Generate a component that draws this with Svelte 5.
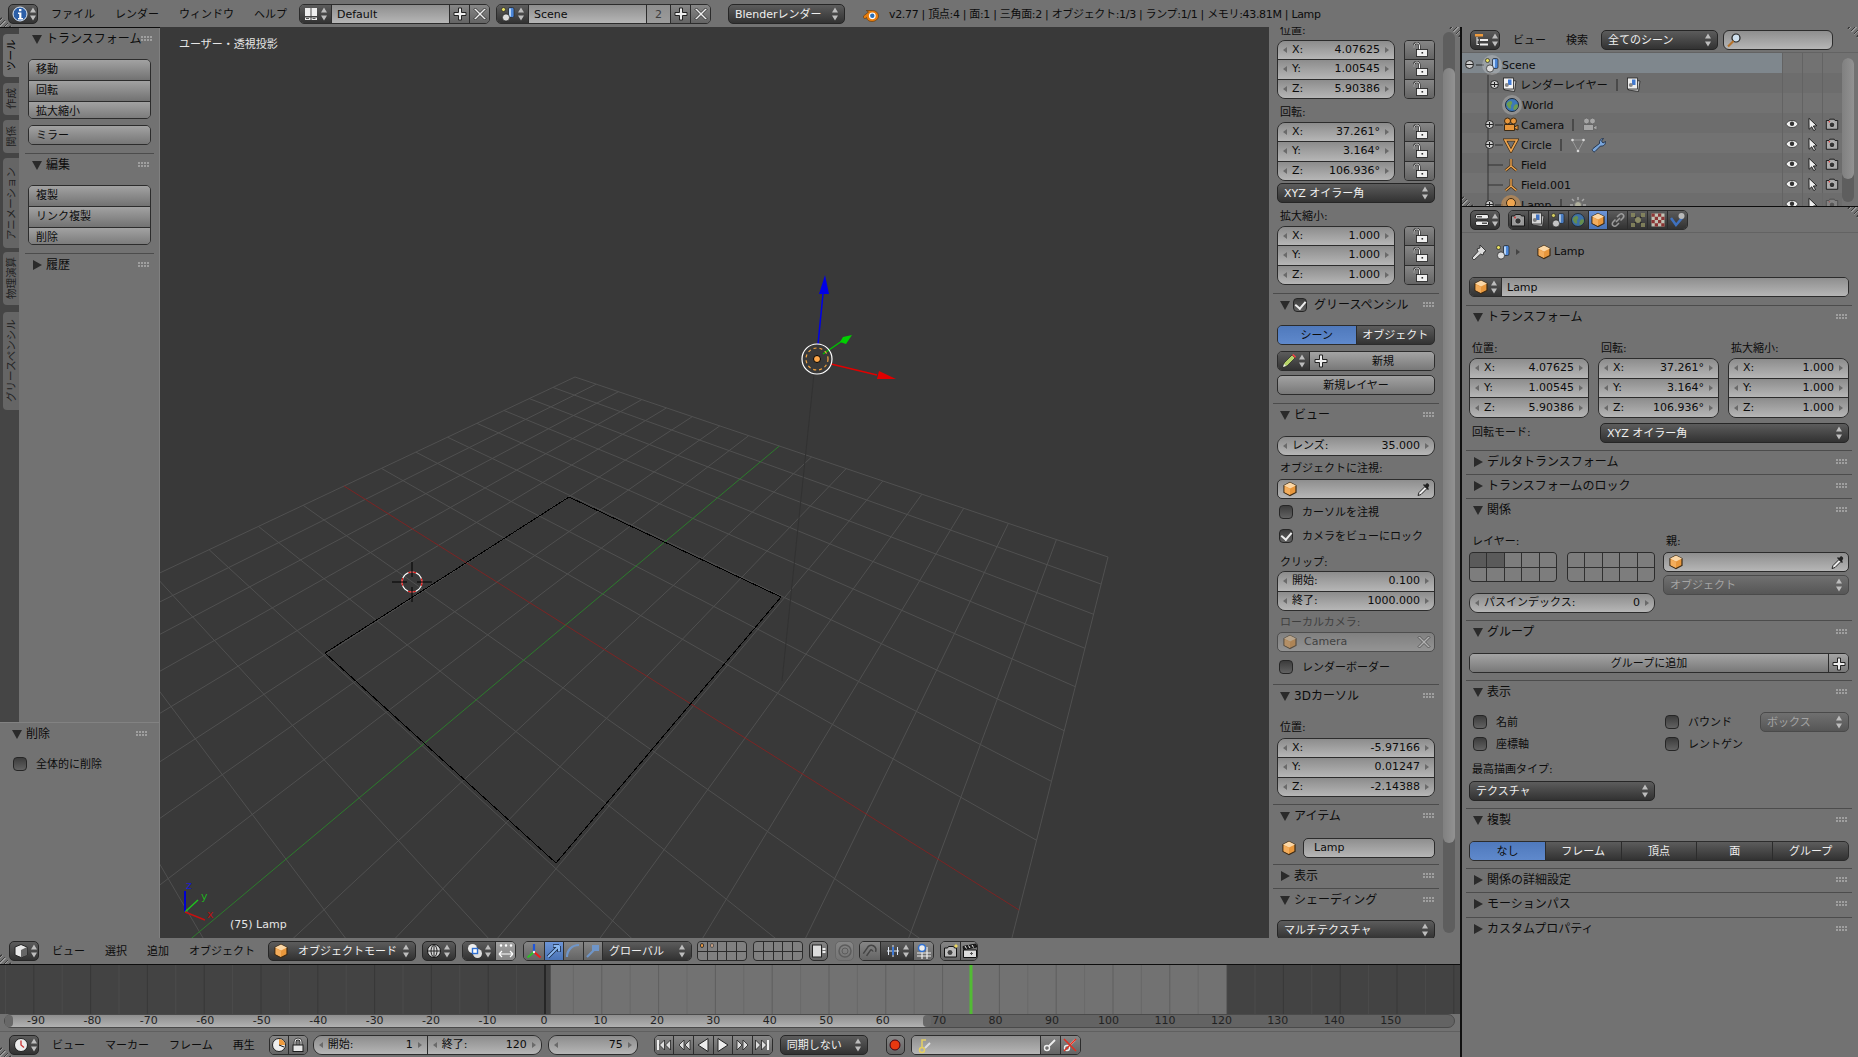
<script>
  // floor grid: homography from ground plane to screen, fitted on the grid corners
  const P = [[575, 377], [1108, 557], [1019, 910], [344, 486]];
  const [[x0, y0], [x1, y1], [x2, y2], [x3, y3]] = P;
  const dx1 = x1 - x2, dx2 = x3 - x2, dx3 = x0 - x1 + x2 - x3;
  const dy1 = y1 - y2, dy2 = y3 - y2, dy3 = y0 - y1 + y2 - y3;
  const den = dx1 * dy2 - dx2 * dy1;
  const g = (dx3 * dy2 - dx2 * dy3) / den;
  const h = (dx1 * dy3 - dx3 * dy1) / den;
  const a = x1 - x0 + g * x1, b = x3 - x0 + h * x3;
  const d = y1 - y0 + g * y1, e = y3 - y0 + h * y3;

  function proj(x, y) {
    const u = (x + 8) / 16, v = (8 - y) / 8;
    const w = g * u + h * v + 1;
    return [(a * u + b * v + x0) / w, (d * u + e * v + y0) / w];
  }
  function line(ax, ay, bx, by) {
    const p = proj(ax, ay), q = proj(bx, by);
    return `M${p[0].toFixed(1)} ${p[1].toFixed(1)}L${q[0].toFixed(1)} ${q[1].toFixed(1)}`;
  }

  let gridPath = '';
  for (let i = -8; i <= 8; i++) {
    if (i !== 0) gridPath += line(i, -8, i, 8) + line(-8, i, 8, i);
  }
  const xAxis = line(-8, 0, 8, 0);
  const yAxis = line(0, -8, 0, 8);

  // timeline
  const frameX = (f) => 545 + f * 5.68;
  const labelX = (f) => 544 + f * 5.645;
  const ticks = [];
  for (let f = -95; f <= 160; f += 5) ticks.push(f);
  const rulerLabels = [];
  for (let f = -90; f <= 150; f += 10) rulerLabels.push(f);

  const rows = [
    { name: 'Scene', x: 1463, gap: 9, exp: 'minus', icon: 'scene', halo: true, sel: true },
    { name: 'レンダーレイヤー', x: 1488, gap: 2, exp: 'plus', icon: 'rlayer', extras: ['rlayer'], bar: 1 },
    { name: 'World', x: 1484, gap: 8, icon: 'world', halo: true },
    { name: 'Camera', x: 1483, gap: 8, exp: 'plus', icon: 'camera', extras: ['camera-gray'], bar: 1, vis: true },
    { name: 'Circle', x: 1483, gap: 8, exp: 'plus', icon: 'meshobj', extras: ['meshdata', 'wrench'], bar: 1, vis: true },
    { name: 'Field', x: 1483, gap: 8, icon: 'empty', vis: true },
    { name: 'Field.001', x: 1483, gap: 8, icon: 'empty', vis: true },
    { name: 'Lamp', x: 1483, gap: 8, exp: 'plus', icon: 'lamp', extras: ['sun-gray'], bar: 1, vis: true, halo: true, lamp: true }
  ];

  const propTabs = ['render', 'rlayer', 'scene', 'world', 'cube', 'link', 'constraint', 'checker', 'physics'];
  const layerCells = Array.from({ length: 10 }, (_, i) => i);
</script>

{#snippet ic(name, cls = '')}
  <svg class="ic {cls}"><use href="#{name}" /></svg>
{/snippet}

{#snippet ud()}
  <svg class="ud"><use href="#updown" /></svg>
{/snippet}

{#snippet hdr(title, open = true, check = false)}
  <div class="hdr">
    <svg class="tri" viewBox="0 0 10 10">
      {#if open}<polygon points="0,1 10,1 5,10" />{:else}<polygon points="1,0 10,5 1,10" />{/if}
    </svg>
    {#if check}<span class="box on small"></span>{/if}
    <span class="ttl">{title}</span>
    <span class="grip"></span>
  </div>
{/snippet}

{#snippet num(label, value)}
  <div class="num">
    <i class="al"></i><span>{label}</span><b>{value}</b><i class="ar"></i>
  </div>
{/snippet}

{#snippet xyz(values)}
  <div class="numgrp">
    {@render num('X:', values[0])}
    {@render num('Y:', values[1])}
    {@render num('Z:', values[2])}
  </div>
{/snippet}

{#snippet locks()}
  <div class="locks">
    <div>{@render ic('lock')}</div>
    <div>{@render ic('lock')}</div>
    <div>{@render ic('lock')}</div>
  </div>
{/snippet}

{#snippet check(label, on = false)}
  <div class="chk">
    <span class="box" class:on></span><span class="chk-t">{label}</span>
  </div>
{/snippet}

{#snippet layers(dotted = false, cls = '')}
  <div class="layers {cls}">
    {#each layerCells as c}
      <span class="lc" class:dot1={dotted && c === 0} class:dot2={dotted && c === 1}></span>
    {/each}
  </div>
{/snippet}

<svg class="defs" width="0" height="0">
  <defs>
    <symbol id="updown" viewBox="0 0 8 14"><path d="M4 .5L7 5.500H1zM4 13.500L1 8.500H7z" fill="#bdbdbd" /></symbol>
    <symbol id="info" viewBox="0 0 16 16"><circle cx="8" cy="8" r="7" fill="#2c5fa8" stroke="#dfe8f3" /><rect x="7" y="3" width="2.400" height="2.200" fill="#fff" /><path d="M6 6.500h3.400V12H11v1.400H6V12h1.200V8H6z" fill="#fff" /></symbol>
    <symbol id="screen" viewBox="0 0 16 16"><path d="M2 2h5.500v8H2zM8.500 2H14v8H8.500zM2 11.500h5.500V14H2zM8.500 11.500H14V14H8.500z" fill="#eee" /><path d="M3 12.500h3M9.500 12.500h3" stroke="#555" /></symbol>
    <symbol id="scene" viewBox="0 0 16 16"><circle cx="3.500" cy="3.500" r="2" fill="#e8e060" stroke="#222" stroke-width=".7" /><rect x="8.500" y="1.500" width="5.500" height="10" rx="1.500" fill="#4b86d8" stroke="#222" stroke-width=".7" /><path d="M9 2.500h2v8H9z" fill="#b8d4f5" /><circle cx="6" cy="11.500" r="3.600" fill="#ddd" stroke="#222" stroke-width=".7" /></symbol>
    <symbol id="blender" viewBox="0 0 16 16"><path d="M.5 10L5.500 6 3.300 4.500h6.200C13 4.500 15.500 7 15.500 10s-3 5.500-6.500 5.500c-3 0-5.200-1.500-5.500-4L2 12.700C1 13 .2 11 .5 10z" fill="#e87d0d" stroke="#5a3208" stroke-width=".6" /><circle cx="9.300" cy="9.800" r="3.400" fill="#fff" /><circle cx="9.300" cy="9.800" r="2.200" fill="#2a6fb8" /></symbol>
    <symbol id="lock" viewBox="0 0 16 16"><path d="M7.500 8V4C7.500 2.200 6.500 1 4.800 1S2 2.200 2 4v2" fill="none" stroke="#1c1c1c" stroke-width="2" /><path d="M7.500 8V4C7.500 2.200 6.500 1 4.800 1S2 2.200 2 4v2" fill="none" stroke="#f6f6f6" stroke-width="1" /><rect x="4.500" y="7.500" width="11" height="7" fill="#f0f0f0" stroke="#1c1c1c" stroke-width=".8" /><rect x="9.500" y="10" width="1.600" height="1.600" fill="#333" /></symbol>
    <symbol id="lockclosed" viewBox="0 0 16 16"><path d="M5 8V5a3 3 0 016 0v3" fill="none" stroke="#1c1c1c" stroke-width="2.600" /><path d="M5 8V5a3 3 0 016 0v3" fill="none" stroke="#eee" stroke-width="1.100" /><rect x="3" y="8" width="10" height="6.500" fill="#e6e6e6" stroke="#1c1c1c" /></symbol>
    <symbol id="pencil" viewBox="0 0 16 16"><path d="M2 14l1-4L11 2l3 3-8 8z" fill="#b6d36a" stroke="#222" stroke-width=".7" /><path d="M11 2l3 3 1-1.400-2.600-2.600z" fill="#e44" /><path d="M2 14l1-3 2 2z" fill="#eee" /></symbol>
    <symbol id="plus" viewBox="0 0 16 16"><path d="M6.500 2h3v4.500H14v3H9.500V14h-3V9.500H2v-3h4.500z" fill="#eee" stroke="#222" /></symbol>
    <symbol id="close" viewBox="0 0 16 16"><path d="M3.500 2L8 6.500 12.500 2 14 3.500 9.500 8 14 12.500 12.500 14 8 9.500 3.500 14 2 12.500 6.500 8 2 3.500z" fill="#eee" stroke="#222" stroke-width=".8" /></symbol>
    <symbol id="cube" viewBox="0 0 16 16"><path d="M8 1.500l6 3v7l-6 3-6-3v-7z" fill="#e8973c" stroke="#3c2a14" stroke-width="1.200" /><path d="M8 1.500l6 3-6 3-6-3z" fill="#fbd7a6" /><path d="M2.600 5.200L8 7.900v6L2.600 11.200z" fill="#f3ad5c" /></symbol>
    <symbol id="dropper" viewBox="0 0 16 16"><path d="M2 14.500l1-3 6-6 2 2-6 6z" fill="#eee" stroke="#222" /><path d="M9 4l1.500-1.500c1-1 3.500 1.500 2.500 2.500L12 7l1 1-1 1-5-5 1-1z" fill="#222" /></symbol>
    <symbol id="view3d" viewBox="0 0 16 16"><path d="M8 1.500l6 2.500v8l-6 2.500L2 12V4z" fill="#e8e8e8" stroke="#222" /><path d="M8 7l6-3v8l-6 2.500z" fill="#666" /></symbol>
    <symbol id="outliner" viewBox="0 0 16 16"><path d="M1 2h8v2.500H1z" fill="#ee9a3c" /><path d="M3 5v8M3 8h2M3 12.500h2" stroke="#eee" /><path d="M6 7h8v2H6zM6 11.500h8v2H6z" fill="#eee" /></symbol>
    <symbol id="props" viewBox="0 0 16 16"><rect x="1.500" y="2.500" width="13" height="4.500" rx="1.500" fill="#eee" stroke="#222" /><rect x="1.500" y="9" width="13" height="4.500" rx="1.500" fill="#eee" stroke="#222" /><rect x="3" y="4" width="5" height="1.500" fill="#555" /><rect x="8" y="10.500" width="5" height="1.500" fill="#555" /></symbol>
    <symbol id="search" viewBox="0 0 16 16"><circle cx="10" cy="6" r="4" fill="#cfe0ee" stroke="#222" stroke-width="1.200" /><path d="M7.500 9L2 14.500" stroke="#b4722c" stroke-width="2.200" /></symbol>
    <symbol id="eye" viewBox="0 0 16 16"><path d="M1 8c2-3 4-4 7-4s5 1 7 4c-2 3-4 4-7 4S3 11 1 8z" fill="#eee" stroke="#222" stroke-width=".8" /><circle cx="8" cy="7.700" r="2.500" fill="#333" /></symbol>
    <symbol id="arrow" viewBox="0 0 16 16"><path d="M4.500 1.500l9 8.500-4 .3 2.500 4-2 1.200-2.300-4.300-3 2.800z" fill="#eee" stroke="#111" /></symbol>
    <symbol id="render" viewBox="0 0 16 16"><path d="M1.500 4h3l1-1.500h5l1 1.500h3v10h-13z" fill="#aaa" stroke="#111" /><circle cx="8" cy="9" r="3.200" fill="#333" stroke="#ddd" stroke-width=".8" /><circle cx="5" cy="5.500" r=".9" fill="#e33" /></symbol>
    <symbol id="rlayer" viewBox="0 0 16 16"><path d="M4 2.500l10 1.500-1.500 10.500-10-1.500z" fill="#ccc" stroke="#222" stroke-width=".8" /><rect x="1.500" y="1" width="10" height="11" fill="#f4f4f4" stroke="#222" stroke-width=".8" /><rect x="6" y="2.500" width="3.500" height="5.500" fill="#3f7ad6" /><circle cx="4.800" cy="8" r="2" fill="#888" /></symbol>
    <symbol id="world" viewBox="0 0 16 16"><circle cx="8" cy="8" r="6.500" fill="#3d78b8" stroke="#1c2a3a" /><path d="M3 6c2-2 4-3 5-1s-2 3-1 5-2 2-3 0-2-2-1-4zM10 9c1-2 3-2 4-1 0 2-1 4-3 5-2 0-2-2-1-4z" fill="#6c9c50" /></symbol>
    <symbol id="camera" viewBox="0 0 16 16"><circle cx="4.500" cy="4" r="3" fill="#e8973c" stroke="#3c2a14" /><circle cx="10.500" cy="4" r="3" fill="#e8973c" stroke="#3c2a14" /><path d="M1.500 7.500h10v6h-10zM11.500 10l3.500-2v5l-3.500-1.500z" fill="#e8973c" stroke="#3c2a14" /></symbol>
    <symbol id="camera-gray" viewBox="0 0 16 16"><circle cx="4.500" cy="4" r="3" fill="#a8a8a8" stroke="#666" /><circle cx="10.500" cy="4" r="3" fill="#a8a8a8" stroke="#666" /><path d="M1.500 7.500h10v6h-10zM11.500 10l3.500-2v5l-3.500-1.500z" fill="#a8a8a8" stroke="#666" /></symbol>
    <symbol id="meshobj" viewBox="0 0 16 16"><path d="M2 3h12L8 14z" fill="none" stroke="#3c2a14" stroke-width="3" /><path d="M2 3h12L8 14z" fill="none" stroke="#f0a650" stroke-width="1.600" /></symbol>
    <symbol id="meshdata" viewBox="0 0 16 16"><path d="M2 3h12L8 14z" fill="none" stroke="#9a9a9a" stroke-width="1" /><circle cx="2.500" cy="3" r="1.300" fill="#ddd" /><circle cx="13.500" cy="3" r="1.300" fill="#ddd" /><circle cx="8" cy="14" r="1.300" fill="#ddd" /></symbol>
    <symbol id="wrench" viewBox="0 0 16 16"><path d="M2 14c-1-1-1-1.500 0-2.500L8.500 6.500C8 4 9.500 1.500 12.500 1.500L10.500 4l1.500 2 2.500-1.500c.3 3-2 5-5 4.500L4 14.500c-1 .8-1.300.5-2-.5z" fill="#7aa8e0" stroke="#1a2a44" stroke-width=".9" /></symbol>
    <symbol id="empty" viewBox="0 0 16 16"><path d="M8 2v7L2.500 13.500M8 9l5.500 4.500" fill="none" stroke="#3c2a14" stroke-width="2.800" /><path d="M8 2v7L2.500 13.500M8 9l5.500 4.500" fill="none" stroke="#f0a650" stroke-width="1.400" /></symbol>
    <symbol id="lamp" viewBox="0 0 16 16"><circle cx="8" cy="6" r="4.500" fill="#f0a650" stroke="#3c2a14" /><rect x="6" y="10.500" width="4" height="3.500" fill="#caa" stroke="#3c2a14" stroke-width=".6" /></symbol>
    <symbol id="sun-gray" viewBox="0 0 16 16"><circle cx="8" cy="8" r="3.500" fill="#b5b5a0" stroke="#777" /><path d="M8 0v3M8 13v3M0 8h3M13 8h3M2 2l2 2M12 12l2 2M2 14l2-2M12 4l2-2" stroke="#aaa" stroke-width="1.500" /></symbol>
    <symbol id="link" viewBox="0 0 16 16"><path d="M7 5l2-2c1.500-1.500 3-1.500 4-.5s1 2.500-.5 4l-2 2M9 11l-2 2c-1.500 1.500-3 1.500-4 .5s-1-2.500.5-4l2-2M6 10l4-4" fill="none" stroke="#aaa" stroke-width="1.600" /></symbol>
    <symbol id="constraint" viewBox="0 0 16 16"><path d="M2 2l12 12M14 2L2 14" stroke="#1f1f1f" stroke-width="1.500" /><rect x="1" y="1" width="4" height="4" fill="#8a8a60" /><rect x="11" y="1" width="4" height="4" fill="#8a8a60" /><rect x="1" y="11" width="4" height="4" fill="#8a8a60" /><rect x="11" y="11" width="4" height="4" fill="#8a8a60" /><circle cx="8" cy="8" r="3" fill="#98986c" /></symbol>
    <symbol id="checker" viewBox="0 0 16 16"><rect x="1.500" y="1.500" width="13" height="13" fill="#d8d8c8" /><path d="M1.500 1.500h3.250v3.250H1.500zM8 1.500h3.250v3.250H8zM4.750 4.750H8V8H4.750zM11.250 4.750h3.250V8h-3.250zM1.500 8h3.250v3.250H1.500zM8 8h3.250v3.250H8zM4.750 11.250H8v3.250H4.750zM11.250 11.250h3.250v3.250h-3.250z" fill="#933" /></symbol>
    <symbol id="physics" viewBox="0 0 16 16"><path d="M1 6l5 7L13 5" fill="none" stroke="#3f7ad6" stroke-width="2.500" /><circle cx="11.500" cy="4" r="3" fill="#ccc" /></symbol>
    <symbol id="globe" viewBox="0 0 16 16"><circle cx="8" cy="8" r="6.500" fill="#d8d8d8" stroke="#111" /><path d="M8 1.500v13M1.500 8h13M8 1.500C4 4 4 12 8 14.500 12 12 12 4 8 1.500" fill="none" stroke="#222" /></symbol>
    <symbol id="pivot" viewBox="0 0 16 16"><circle cx="5.500" cy="5.500" r="4.500" fill="#eee" /><circle cx="10.500" cy="10.500" r="4.500" fill="#ddd" /><rect x="5.500" y="5.500" width="5" height="5" fill="#fff" stroke="#2f6fd0" stroke-width="1.400" /></symbol>
    <symbol id="manip" viewBox="0 0 16 16"><path d="M3 2.500h.01M8 2.500h.01M13 2.500h.01" stroke="#fff" stroke-width="2.500" stroke-linecap="round" /><path d="M1 11h14M1 11l3-3M1 11l3 3M15 11l-3-3M15 11l-3 3" fill="none" stroke="#fff" stroke-width="1.200" /></symbol>
    <symbol id="axes" viewBox="0 0 16 16"><path d="M8 1v8" stroke="#1f55d8" stroke-width="2.200" /><path d="M8 9l-6.500 5.500" stroke="#2ec028" stroke-width="2.200" /><path d="M8 9l6.500 5.500" stroke="#ee1c1c" stroke-width="2.200" /><circle cx="8" cy="9" r="1.200" fill="#eee" /></symbol>
    <symbol id="move" viewBox="0 0 16 16"><path d="M2 14L13 3M13 3H7M13 3v6" fill="none" stroke="#1a2a44" stroke-width="3.500" /><path d="M2 14L13 3M13 3H7.500M13 3v5.500" fill="none" stroke="#8ab8f0" stroke-width="2" /></symbol>
    <symbol id="rotate" viewBox="0 0 16 16"><path d="M2 14C2 7 7 2 14 2" fill="none" stroke="#6f95c8" stroke-width="2.200" /></symbol>
    <symbol id="scale" viewBox="0 0 16 16"><path d="M2 14L10 6" stroke="#6f95c8" stroke-width="2.200" /><rect x="7" y="2" width="7" height="6" fill="#6f95c8" /></symbol>
    <symbol id="binder" viewBox="0 0 16 16"><rect x="1.500" y="2" width="9" height="12" fill="#ddd" stroke="#222" /><path d="M13 5v6" stroke="#eee" stroke-width="3" stroke-dasharray="2 1" /></symbol>
    <symbol id="prop-off" viewBox="0 0 16 16"><circle cx="8" cy="8" r="6" fill="none" stroke="#5c5c5c" stroke-width="1.500" /><circle cx="8" cy="8" r="3" fill="none" stroke="#5c5c5c" /></symbol>
    <symbol id="magnet" viewBox="0 0 16 16"><path d="M4 14V7a4.500 4.500 0 019-1.500M8 14V7c0-1 2.500-1 2.500 0" fill="none" stroke="#444" stroke-width="1.500" transform="rotate(35 8 8)" /></symbol>
    <symbol id="snapinc" viewBox="0 0 16 16"><path d="M2 8h12M8 2v12" stroke="#dfe8f5" stroke-width="1" /><path d="M3.500 4v8M12.500 4v8" stroke="#dfe8f5" /><rect x="7" y="4" width="2" height="8" fill="#3f7ad6" /></symbol>
    <symbol id="snapgrid" viewBox="0 0 16 16"><path d="M1 10h14M1 13h14M6 4v12M11 4v12" stroke="#eee" stroke-width="1.200" /><circle cx="6" cy="5" r="3.500" fill="#eee" stroke="#2f6fd0" stroke-width="1.500" /></symbol>
    <symbol id="camrender" viewBox="0 0 16 16"><path d="M1.500 5h3l1-1.500h5l1 1.500h2v9h-12z" fill="#bbb" stroke="#111" /><circle cx="7" cy="9.500" r="3" fill="#444" stroke="#ddd" stroke-width=".8" /><path d="M13 .5l.7 1.800 1.800.7-1.800.7-.7 1.800-.7-1.800-1.800-.7 1.800-.7z" fill="#fbe25a" /></symbol>
    <symbol id="clap" viewBox="0 0 16 16"><path d="M1.500 7h13v7.500h-13z" fill="#ddd" stroke="#111" /><path d="M1 3.500L14 1l.7 3-13 2.500z" fill="#222" stroke="#111" /><path d="M3 3l1.500 2.500M6.500 2.500L8 5M10 2l1.500 2.500" stroke="#eee" /><path d="M8 10.500h3M9.500 9v3" stroke="#555" /></symbol>
    <symbol id="clock" viewBox="0 0 16 16"><circle cx="8" cy="8" r="6.500" fill="#eee" stroke="#222" /><path d="M8 3.500V8l3 2.500" fill="none" stroke="#c33" stroke-width="1.300" /></symbol>
    <symbol id="clockorange" viewBox="0 0 16 16"><circle cx="8" cy="8" r="6.500" fill="#eee" stroke="#222" /><path d="M8 2a6 6 0 016 6H8z" fill="#ee9a3c" /><path d="M8 8l5 2" stroke="#111" /></symbol>
    <symbol id="first" viewBox="0 0 16 16"><path d="M2 3v10" stroke="#eee" stroke-width="2" /><path d="M8.500 3L3.500 8l5 5zM14.500 3l-5 5 5 5z" fill="#ddd" stroke="#222" stroke-width=".8" /></symbol>
    <symbol id="prevkey" viewBox="0 0 16 16"><path d="M8 3L3 8l5 5zM14 3L9 8l5 5z" fill="#ddd" stroke="#222" stroke-width=".8" /></symbol>
    <symbol id="playrev" viewBox="0 0 16 16"><path d="M13 1.500L3 8l10 6.500z" fill="#eee" stroke="#222" /></symbol>
    <symbol id="play" viewBox="0 0 16 16"><path d="M3 1.500L13 8 3 14.500z" fill="#eee" stroke="#222" /></symbol>
    <symbol id="nextkey" viewBox="0 0 16 16"><path d="M2 3l5 5-5 5zM8 3l5 5-5 5z" fill="#ddd" stroke="#222" stroke-width=".8" /></symbol>
    <symbol id="last" viewBox="0 0 16 16"><path d="M14 3v10" stroke="#eee" stroke-width="2" /><path d="M1.500 3l5 5-5 5zM7.500 3l5 5-5 5z" fill="#ddd" stroke="#222" stroke-width=".8" /></symbol>
    <symbol id="rec" viewBox="0 0 16 16"><circle cx="8" cy="8" r="5" fill="#e8380f" stroke="#401" /></symbol>
    <symbol id="key" viewBox="0 0 16 16"><circle cx="5" cy="12" r="2.500" fill="none" stroke="#e6d060" stroke-width="1.500" /><path d="M5 9.500V2h4" fill="none" stroke="#e6d060" stroke-width="1.500" /><path d="M8 10l5-5" stroke="#ddd" stroke-width="2" /></symbol>
    <symbol id="keyadd" viewBox="0 0 16 16"><circle cx="5" cy="11" r="2.500" fill="none" stroke="#eee" stroke-width="1.400" /><path d="M7 9l6-6" stroke="#eee" stroke-width="1.800" /></symbol>
    <symbol id="keydel" viewBox="0 0 16 16"><circle cx="5" cy="11" r="2.500" fill="none" stroke="#eee" stroke-width="1.400" /><path d="M7 9l6-6" stroke="#eee" stroke-width="1.800" /><path d="M2 2l12 12M14 2L2 14" stroke="#e03020" stroke-width="1.500" /></symbol>
  </defs>
</svg>

<div class="app">
  <!-- top info bar -->
  <header class="topbar hd">
    <div class="corner bl"></div>
    <div class="dd tiny info-btn">{@render ic('info')}{@render ud()}</div>
    <span class="menu first">ファイル</span>
    <span class="menu">レンダー</span>
    <span class="menu">ウィンドウ</span>
    <span class="menu">ヘルプ</span>

    <div class="grp layout-sel">
      <div class="seg dark w31">{@render ic('screen')}{@render ud()}</div>
      <div class="seg tx grow">Default</div>
      <div class="seg tog w20">{@render ic('plus')}</div>
      <div class="seg tog w20">{@render ic('close')}</div>
    </div>
    <div class="grp scene-sel">
      <div class="seg dark w31">{@render ic('scene')}{@render ud()}</div>
      <div class="seg tx grow">Scene</div>
      <div class="seg users">2</div>
      <div class="seg tog w20">{@render ic('plus')}</div>
      <div class="seg tog w20">{@render ic('close')}</div>
    </div>
    <div class="dd render-sel"><span>Blenderレンダー</span>{@render ud()}</div>
    <div class="logo">{@render ic('blender')}</div>
    <span class="stats">v2.77 | 頂点:4 | 面:1 | 三角面:2 | オブジェクト:1/3 | ランプ:1/1 | メモリ:43.81M | Lamp</span>
  </header>

  <div class="main">
    <div class="left">
      <div class="editor3d">
        <aside class="tools">
          <div class="tools-top">
            <nav class="tabs">
              <span class="tab on t1">ツール</span>
              <span class="tab t2">作成</span>
              <span class="tab t3">関係</span>
              <span class="tab t4">アニメーション</span>
              <span class="tab t5">物理演算</span>
              <span class="tab t6">グリースペンシル</span>
            </nav>
            <div class="toolcol">
              <div class="m1">{@render hdr('トランスフォーム')}</div>
              <div class="btngrp m9">
                <div>移動</div><div>回転</div><div>拡大縮小</div>
              </div>
              <div class="btngrp single m6"><div>ミラー</div></div>
              <hr class="sep m8" />
              {@render hdr('編集')}
              <div class="btngrp m9">
                <div>複製</div><div>リンク複製</div><div>削除</div>
              </div>
              <hr class="sep m8" />
              {@render hdr('履歴', false)}
            </div>
          </div>
          <div class="operator">
            <div class="oppad">{@render hdr('削除')}</div>
            <div class="op-check">{@render check('全体的に削除')}</div>
          </div>
        </aside>

        <main class="view">
          <svg class="scene3d" viewBox="160 27 1109 911" width="1109" height="911">
            <path d={gridPath} fill="none" stroke="#505050" stroke-width="1" />
            <path d={xAxis} fill="none" stroke="#7c2424" stroke-width="1" />
            <path d={yAxis} fill="none" stroke="#2c7c2c" stroke-width="1" />
            <polygon points="569,497 781,597 556,863 325,653" fill="none" stroke="#000" stroke-width="1" shape-rendering="crispEdges" />
            <path d="M814 374L782 681" stroke="#323232" stroke-width="1" fill="none" />

            <!-- lamp and its manipulator -->
            <path d="M818 344L823 294" stroke="#0000e6" stroke-width="1.500" />
            <polygon points="825,275 829,294 819,294" fill="#0000e6" />
            <path d="M823 354L842 341" stroke="#00c000" stroke-width="1.500" />
            <polygon points="852,335 846,344 840,342 843,337" fill="#00d000" />
            <path d="M831 364L877 375" stroke="#e00000" stroke-width="1.500" />
            <polygon points="896,379 877,379 879,371" fill="#e00000" />
            <circle cx="817" cy="359" r="15" fill="none" stroke="#fff" stroke-width="1.200" />
            <circle cx="817" cy="359" r="11" fill="none" stroke="#f5a540" stroke-width="1.200" stroke-dasharray="3 3" />
            <circle cx="817" cy="359" r="3.500" fill="#ffa84a" stroke="#000" stroke-width="1" />

            <!-- 3d cursor -->
            <circle cx="412" cy="582" r="10" fill="none" stroke="#fff" stroke-width="1.200" />
            <circle cx="412" cy="582" r="10" fill="none" stroke="#e01010" stroke-width="1.200" stroke-dasharray="7.800 7.900" stroke-dashoffset="3.900" />
            <path d="M392 582h15M417 582h15M412 562v15M412 587v15" stroke="#000" stroke-width="1" />

            <!-- small axis widget -->
            <path d="M185 912v-21" stroke="#0000d0" stroke-width="2" />
            <path d="M185 912l13-12" stroke="#20c020" stroke-width="1.500" />
            <path d="M185 912l20 8" stroke="#c81010" stroke-width="1.500" />
          </svg>
          <span class="vlabel view-name">ユーザー・透視投影</span>
          <span class="vlabel obj-name">(75) Lamp</span>
          <span class="axl axz">z</span><span class="axl axy">y</span><span class="axl axx">x</span>
        </main>

        <aside class="npanel">
          <div class="corner tr"></div>
          <div class="ncontent">
            <div class="lab first-lab">位置:</div>
            <div class="two m2">{@render xyz(['4.07625', '1.00545', '5.90386'])}{@render locks()}</div>
            <div class="lab m7">回転:</div>
            <div class="two m2">{@render xyz(['37.261°', '3.164°', '106.936°'])}{@render locks()}</div>
            <div class="dd m2 wide"><span>XYZ オイラー角</span>{@render ud()}</div>
            <div class="lab m7">拡大縮小:</div>
            <div class="two m2">{@render xyz(['1.000', '1.000', '1.000'])}{@render locks()}</div>
            <hr class="sep m8" />
            {@render hdr('グリースペンシル', true, true)}
            <div class="radio m9"><div class="active">シーン</div><div>オブジェクト</div></div>
            <div class="grp m6 gp-new">
              <div class="seg dark w31">{@render ic('pencil')}{@render ud()}</div>
              <div class="seg btn grow"><span class="gp-plus">{@render ic('plus')}</span><span class="gp-txt">新規</span></div>
            </div>
            <div class="btn1 m4">新規レイヤー</div>
            <hr class="sep m8" />
            {@render hdr('ビュー')}
            <div class="numgrp one m10">{@render num('レンズ:', '35.000')}</div>
            <div class="lab m6">オブジェクトに注視:</div>
            <div class="field m3">{@render ic('cube')}<span class="sp"></span>{@render ic('dropper')}</div>
            <div class="m5">{@render check('カーソルを注視')}</div>
            <div class="m8">{@render check('カメラをビューにロック', true)}</div>
            <div class="lab m12">クリップ:</div>
            <div class="numgrp two-rows m1">
              {@render num('開始:', '0.100')}
              {@render num('終了:', '1000.000')}
            </div>
            <div class="lab m5 dim">ローカルカメラ:</div>
            <div class="field m2 dim">{@render ic('cube')}<span class="sp pad">Camera</span>{@render ic('close')}</div>
            <div class="m7">{@render check('レンダーボーダー')}</div>
            <hr class="sep m9" />
            {@render hdr('3Dカーソル')}
            <div class="lab m14">位置:</div>
            <div class="m3">{@render xyz(['-5.97166', '0.01247', '-2.14388'])}</div>
            <hr class="sep m7" />
            {@render hdr('アイテム')}
            <div class="item m11">{@render ic('cube')}<div class="field grow"><span class="pad">Lamp</span></div></div>
            <hr class="sep m6" />
            {@render hdr('表示', false)}
            <hr class="sep m1" />
            {@render hdr('シェーディング')}
            <div class="dd m9 wide"><span>マルチテクスチャ</span>{@render ud()}</div>
          </div>
          <div class="scroll vscroll"><div class="thumb"></div></div>
        </aside>
      </div>

      <!-- 3d view header -->
      <div class="hd h3d">
        <div class="corner bl"></div>
        <div class="dd tiny ed-btn">{@render ic('view3d')}{@render ud()}</div>
        <span class="menu first">ビュー</span>
        <span class="menu">選択</span>
        <span class="menu">追加</span>
        <span class="menu">オブジェクト</span>
        <div class="dd mode">{@render ic('cube')}<span class="ml4">オブジェクトモード</span>{@render ud()}</div>
        <div class="dd shade">{@render ic('globe')}{@render ud()}</div>
        <div class="grp pivot">
          <div class="seg dark grow">{@render ic('pivot')}{@render ud()}</div>
          <div class="seg tog lt w20">{@render ic('manip')}</div>
        </div>
        <div class="grp manip">
          <div class="seg tog m-btn">{@render ic('axes')}</div>
          <div class="seg blue m-btn">{@render ic('move')}</div>
          <div class="seg tog m-btn">{@render ic('rotate')}</div>
          <div class="seg tog m-btn">{@render ic('scale')}</div>
          <div class="seg dark global"><span>グローバル</span>{@render ud()}</div>
        </div>
        {@render layers(true, 'la1')}
        {@render layers(false, 'la2')}
        <div class="tbtn t-bind">{@render ic('binder')}</div>
        <div class="tbtn t-prop">{@render ic('prop-off')}</div>
        <div class="grp snap">
          <div class="seg tog w20">{@render ic('magnet')}</div>
          <div class="seg dark grow">{@render ic('snapinc')}{@render ud()}</div>
          <div class="seg tog w20">{@render ic('snapgrid')}</div>
        </div>
        <div class="grp cam">
          <div class="seg tog w19">{@render ic('camrender')}</div>
          <div class="seg tog w19">{@render ic('clap')}</div>
        </div>
      </div>

      <!-- timeline -->
      <div class="timeline">
        <svg class="tl-grid" width="1460" height="49">
          <rect x="0" y="0" width="1460" height="49" fill="#434343" />
          <rect x={frameX(1)} y="0" width={frameX(120) - frameX(1)} height="49" fill="#727272" />
          {#each ticks as f}
            <line x1={frameX(f)} x2={frameX(f)} y1="0" y2="49"
              stroke={f >= 1 && f <= 120 ? (f % 10 === 0 ? '#5f5f5f' : '#696969') : (f % 10 === 0 ? '#383838' : '#4c4c4c')} />
          {/each}
          <line x1={frameX(0)} x2={frameX(0)} y1="0" y2="49" stroke="#111" />
          <rect x={frameX(75) - 1.5} y="0" width="3" height="49" fill="#52bb34" />
        </svg>
        <div class="ruler">
          <div class="ruler-thumb"><i></i><i></i></div>
          {#each rulerLabels as f}
            <span class="tick" style="left:{labelX(f)}px">{f}</span>
          {/each}
        </div>
      </div>

      <!-- timeline header -->
      <div class="hd htime">
        <div class="corner bl"></div>
        <div class="dd tiny ed-btn">{@render ic('clock')}{@render ud()}</div>
        <span class="menu first">ビュー</span>
        <span class="menu">マーカー</span>
        <span class="menu">フレーム</span>
        <span class="menu">再生</span>
        <div class="grp clock-grp">
          <div class="seg tog grow">{@render ic('clockorange')}</div>
          <div class="seg tog grow">{@render ic('lockclosed')}</div>
        </div>
        <div class="numrow range">
          {@render num('開始:', '1')}
          {@render num('終了:', '120')}
        </div>
        <div class="numrow cur">{@render num('', '75')}</div>
        <div class="grp play">
          <div class="seg tog grow">{@render ic('first')}</div>
          <div class="seg tog grow">{@render ic('prevkey')}</div>
          <div class="seg tog grow">{@render ic('playrev')}</div>
          <div class="seg tog grow">{@render ic('play')}</div>
          <div class="seg tog grow">{@render ic('nextkey')}</div>
          <div class="seg tog grow">{@render ic('last')}</div>
        </div>
        <div class="dd sync"><span>同期しない</span>{@render ud()}</div>
        <div class="tbtn rec">{@render ic('rec')}</div>
        <div class="grp keying">
          <div class="seg tx grow">{@render ic('key')}</div>
          <div class="seg tog w20">{@render ic('keyadd')}</div>
          <div class="seg tog w20">{@render ic('keydel')}</div>
        </div>
      </div>
    </div>

    <div class="right">
      <!-- outliner -->
      <section class="outliner">
        <div class="corner tr"></div>
        <div class="corner bl"></div>
        <div class="hd oh">
          <div class="dd tiny ed-btn">{@render ic('outliner')}{@render ud()}</div>
          <span class="menu o1">ビュー</span>
          <span class="menu">検索</span>
          <div class="dd scenes"><span>全てのシーン</span>{@render ud()}</div>
          <div class="field search">{@render ic('search')}</div>
        </div>
        <div class="tree">
          <svg class="lines" width="396" height="153" viewBox="1462 53 396 153">
            <path d="M1476 65h8M1488 75v131M1495 125h8M1495 145h8M1488 165h15M1488 185h15M1495 205h8" fill="none" stroke="#333" />
          </svg>
          {#each rows as r, i}
            <div class="row" class:alt={i % 2 === 1} class:sel={r.sel} style="padding-left:{r.x - 1462}px">
              <span class="exp">
                {#if r.exp}<span class="circ" class:minus={r.exp === 'minus'}></span>{/if}
              </span>
              <span class="oicon" class:halo={r.halo} class:orange={r.lamp} style="margin-left:{r.gap}px">{@render ic(r.icon)}</span>
              <span class="oname">{r.name}</span>
              {#if r.bar}<span class="obar"></span>{/if}
              {#each r.extras ?? [] as x}<span class="oextra">{@render ic(x)}</span>{/each}
            </div>
          {/each}
          <div class="cols">
            {#each rows as r}
              <div class="colrow">
                {#if r.vis}
                  <span>{@render ic('eye', 'sm')}</span>
                  <span>{@render ic('arrow', 'sm')}</span>
                  <span class:faded={r.lamp}>{@render ic('render', 'sm')}</span>
                {:else}
                  <span></span><span></span><span></span>
                {/if}
              </div>
            {/each}
          </div>
          <div class="scroll oscroll"><div class="thumb"></div></div>
        </div>
      </section>

      <!-- properties -->
      <section class="props">
        <div class="corner tr"></div>
        <div class="hd ph">
          <div class="dd tiny ed-btn">{@render ic('props')}{@render ud()}</div>
          <div class="grp ptabs">
            {#each propTabs as t}
              <div class="seg w20 {t === 'cube' ? 'blue' : 'dark'}">{@render ic(t)}</div>
            {/each}
          </div>
        </div>
        <div class="pbody">
          <div class="crumbs">
            <svg class="ic pin" viewBox="0 0 16 16"><path d="M9 1l6 6-2 1-1 3-2.500-1L3 16 1 14l6-6.500L6 5l3-1z" fill="#ddd" stroke="#222" stroke-width=".8" /></svg>
            <span class="c-scene">{@render ic('scene')}</span>
            <svg class="c-arr" viewBox="0 0 6 8"><polygon points="1,1 5,4 1,7" fill="#444" /></svg>
            <span class="c-cube">{@render ic('cube')}</span>
            <span>Lamp</span>
          </div>
          <div class="grp namefield">
            <div class="seg dark w31">{@render ic('cube')}{@render ud()}</div>
            <div class="seg tx grow">Lamp</div>
          </div>
          <hr class="psep m8" />
          {@render hdr('トランスフォーム')}
          <div class="tri-col m14">
            <div><div class="lab">位置:</div><div class="m2">{@render xyz(['4.07625', '1.00545', '5.90386'])}</div></div>
            <div><div class="lab">回転:</div><div class="m2">{@render xyz(['37.261°', '3.164°', '106.936°'])}</div></div>
            <div><div class="lab">拡大縮小:</div><div class="m2">{@render xyz(['1.000', '1.000', '1.000'])}</div></div>
          </div>
          <div class="rotmode m5"><span class="lab">回転モード:</span><div class="dd rm"><span>XYZ オイラー角</span>{@render ud()}</div></div>
          <hr class="psep m7" />
          {@render hdr('デルタトランスフォーム', false)}
          <hr class="psep m1" />
          {@render hdr('トランスフォームのロック', false)}
          <hr class="psep m1" />
          {@render hdr('関係')}
          <div class="rel m14">
            <div class="rel-l">
              <div class="lab">レイヤー:</div>
              <div class="layrow m3">{@render layers(false, 'big first-act')}{@render layers(false, 'big')}</div>
              <div class="numgrp one m11">{@render num('パスインデックス:', '0')}</div>
            </div>
            <div class="rel-r">
              <div class="lab">親:</div>
              <div class="field m3">{@render ic('cube')}<span class="sp"></span>{@render ic('dropper')}</div>
              <div class="dd dimdd m3"><span>オブジェクト</span>{@render ud()}</div>
            </div>
          </div>
          <hr class="psep m7" />
          {@render hdr('グループ')}
          <div class="grp addgroup m10">
            <div class="seg btn grow">グループに追加</div>
            <div class="seg btn w20">{@render ic('plus')}</div>
          </div>
          <hr class="psep m7" />
          {@render hdr('表示')}
          <div class="disp m9">
            <div class="disp1">{@render check('名前')}</div>
            <div class="disp2">{@render check('バウンド')}</div>
            <div class="dd dimdd box-dd"><span>ボックス</span>{@render ud()}</div>
          </div>
          <div class="disp m2">
            <div class="disp1">{@render check('座標軸')}</div>
            <div class="disp2">{@render check('レントゲン')}</div>
          </div>
          <div class="lab m9">最高描画タイプ:</div>
          <div class="dd half m4"><span>テクスチャ</span>{@render ud()}</div>
          <hr class="psep m7" />
          {@render hdr('複製')}
          <div class="radio five m10">
            <div class="active">なし</div><div>フレーム</div><div>頂点</div><div>面</div><div>グループ</div>
          </div>
          <hr class="psep m7" />
          {@render hdr('関係の詳細設定', false)}
          <hr class="psep m1" />
          {@render hdr('モーションパス', false)}
          <hr class="psep m2" />
          {@render hdr('カスタムプロパティ', false)}
        </div>
      </section>
    </div>
  </div>
</div>

<style>
  :global(body) {
    margin: 0;
    background: #727272;
  }
  .app {
    width: 1858px;
    height: 1057px;
    overflow: hidden;
    display: flex;
    flex-direction: column;
    font: 11px/14px "DejaVu Sans", "Noto Sans CJK JP", sans-serif;
    color: #0c0c0c;
    background: #727272;
  }
  .defs { position: absolute; }
  .ic { width: 16px; height: 16px; flex: none; display: block; }
  .ic.sm { width: 14px; height: 14px; }
  .ud { width: 8px; height: 14px; flex: none; display: block; }

  /* panel separators, margin-top comes from the m* classes below */
  .sep, .psep { border: 0; height: 1px; background: #4c4c4c; margin: 0; }
  .sep { margin-left: -4px; margin-right: -4px; }
  .psep { margin-left: -3px; margin-right: -3px; }

  .m1 { margin-top: 1px; } .m2 { margin-top: 2px; } .m3 { margin-top: 3px; }
  .m4 { margin-top: 4px; } .m5 { margin-top: 5px; } .m6 { margin-top: 6px; }
  .m7 { margin-top: 7px; } .m8 { margin-top: 8px; } .m9 { margin-top: 9px; }
  .m10 { margin-top: 10px; } .m11 { margin-top: 11px; } .m12 { margin-top: 12px; }
  .m13 { margin-top: 13px; } .m14 { margin-top: 14px; }
  .ml4 { margin-left: 4px; }
  .dim { opacity: .5; }
  .grow { flex: 1; min-width: 0; }
  .w19 { width: 19px; } .w20 { width: 20px; } .w31 { width: 31px; }

  /* hatch of the area corners */
  .corner {
    position: absolute;
    width: 12px;
    height: 11px;
    background: repeating-linear-gradient(135deg, transparent 0 2px, #3c3c3c 2px 3px, #9a9a9a 3px 4px);
    z-index: 3;
  }
  .corner.bl { left: 0; bottom: 0; clip-path: polygon(0 0, 100% 100%, 0 100%); }
  .corner.tr { right: 0; top: 0; clip-path: polygon(0 0, 100% 0, 100% 100%); }

  /* header bars */
  .hd {
    position: relative;
    display: flex;
    align-items: center;
    flex: none;
    background: #727272;
    box-sizing: border-box;
  }
  .topbar { height: 28px; margin-bottom: -1px; border-bottom: 1px solid #0d0d0d; padding-left: 8px; padding-top: 1px; }
  .menu { margin-left: 20px; white-space: nowrap; position: relative; top: 1px; }
  .menu.first { margin-left: 13px; }

  /* dark menus */
  .dd, .seg.dark {
    background: linear-gradient(#5c5c5c, #323232);
    color: #efefef;
  }
  .dd {
    height: 20px;
    box-sizing: border-box;
    border: 1px solid #262626;
    border-radius: 5px;
    display: flex;
    align-items: center;
    justify-content: space-between;
    padding: 0 5px 0 6px;
    flex: none;
    white-space: nowrap;
  }
  .dd > span, .seg > span { position: relative; top: 1px; }
  .seg > span.gp-plus { top: 0; }
  .dd.tiny { width: 30px; padding: 0 3px; gap: 1px; }
  .dd.wide { width: 158px; }
  .dd.half { width: 186px; }
  .dd.dimdd { background: linear-gradient(#707070, #565656); color: #a4a4a4; border-color: #4a4a4a; }

  /* joined button groups */
  .grp {
    display: flex;
    height: 20px;
    box-sizing: border-box;
    border: 1px solid #2c2c2c;
    border-radius: 5px;
    overflow: hidden;
    flex: none;
  }
  .seg {
    display: flex;
    align-items: center;
    justify-content: center;
    box-sizing: border-box;
    border-left: 1px solid #2c2c2c;
    flex: none;
  }
  .seg:first-child { border-left: 0; }
  .seg.dark { gap: 1px; }
  .seg.tog { background: linear-gradient(#868686, #646464); }
  .seg.tog.lt { background: linear-gradient(#a0a0a0, #868686); }
  .seg.blue { background: linear-gradient(#6d95d6, #4a74b6); }
  .seg.tx {
    justify-content: flex-start;
    padding: 2px 0 0 5px;
    background: linear-gradient(#8e8e8e, #b6b6b6);
  }
  .seg.btn { background: linear-gradient(#a4a4a4, #787878); padding-top: 2px; }
  .seg.users { width: 24px; background: linear-gradient(#8e8e8e, #9c9c9c); color: #3e3e3e; padding-top: 2px; }
  .seg.grow { flex: 1; }
  .tbtn {
    width: 19px;
    height: 20px;
    box-sizing: border-box;
    border: 1px solid #2c2c2c;
    border-radius: 5px;
    background: linear-gradient(#868686, #646464);
    display: flex;
    align-items: center;
    justify-content: center;
    flex: none;
  }

  .layout-sel { width: 191px; margin-left: 12px; }
  .scene-sel { width: 215px; margin-left: 6px; }
  .render-sel { width: 117px; margin-left: 17px; }
  .logo { margin-left: 18px; }
  .stats { margin-left: 10px; white-space: nowrap; letter-spacing: -.32px; position: relative; top: 1px; }

  .main { flex: 1; display: flex; min-height: 0; }
  .left { width: 1460px; display: flex; flex-direction: column; flex: none; }
  .right {
    flex: 1;
    display: flex;
    flex-direction: column;
    border-left: 2px solid #111;
  }

  .editor3d { display: flex; height: 911px; flex: none; }

  /* tool shelf */
  .tools {
    width: 160px;
    flex: none;
    display: flex;
    flex-direction: column;
    border-right: 1px solid #808080;
    box-sizing: border-box;
  }
  .tools-top { flex: 1; display: flex; min-height: 0; }
  .tabs {
    width: 19px;
    flex: none;
    background: #454545;
    display: flex;
    flex-direction: column;
    align-items: flex-end;
  }
  .tab {
    width: 16px;
    box-sizing: border-box;
    background: #656565;
    color: #222;
    writing-mode: vertical-rl;
    text-orientation: sideways;
    transform: rotate(180deg);
    border-radius: 0 4px 4px 0;
    display: flex;
    align-items: center;
    justify-content: center;
    line-height: 16px;
    white-space: nowrap;
    font-size: 10.5px;
  }
  .tab.on { background: #727272; color: #000; }
  .t1 { height: 43px; margin-top: 7px; }
  .t2 { height: 32px; margin-top: 6px; }
  .t3 { height: 33px; margin-top: 5px; }
  .t4 { height: 90px; margin-top: 5px; }
  .t5 { height: 53px; margin-top: 4px; }
  .t6 { height: 98px; margin-top: 7px; }
  .toolcol { flex: 1; padding: 0 8px 0 9px; min-width: 0; }
  .toolcol .hdr { margin: 0 -3px; }
  .toolcol .sep { margin-left: -3px; margin-right: -3px; }

  .operator {
    height: 216px;
    flex: none;
    border-top: 1px solid #828282;
    box-sizing: border-box;
    background: #727272;
  }
  .oppad { padding: 0 7px 0 5px; }
  .op-check { margin: 11px 0 0 11px; }

  /* panel header */
  .hdr {
    height: 22px;
    display: flex;
    align-items: center;
    padding: 0 5px 0 7px;
    position: relative;
  }
  .tri { width: 10px; height: 10px; fill: #2a2a2a; flex: none; }
  .ttl { font-size: 12px; margin-left: 4px; white-space: nowrap; }
  .grip {
    margin-left: auto;
    width: 11px;
    height: 6px;
    flex: none;
    background-image: radial-gradient(circle at 1px 1px, #c0c0c0 .5px, transparent 1px);
    background-size: 3px 3px;
  }
  .box {
    width: 14px;
    height: 14px;
    box-sizing: border-box;
    display: block;
    flex: none;
    border: 1px solid #262626;
    border-radius: 4px;
    background: linear-gradient(#3c3c3c, #626262);
    position: relative;
  }
  .box.small { margin: 0 7px 0 3px; }
  .box.on::after {
    content: "";
    position: absolute;
    left: 3px;
    top: 0;
    width: 5px;
    height: 8px;
    border: solid #eee;
    border-width: 0 2px 2px 0;
    transform: rotate(40deg);
  }
  .hdr:has(.box.small) .ttl { margin-left: 0; }
  .chk { display: flex; align-items: center; gap: 9px; height: 16px; padding-left: 2px; white-space: nowrap; }
  .chk-t { position: relative; top: 1px; }

  .btngrp {
    height: 60px;
    box-sizing: border-box;
    border: 1px solid #2c2c2c;
    border-radius: 5px;
    overflow: hidden;
    display: flex;
    flex-direction: column;
  }
  .btngrp.single { height: 20px; }
  .btngrp > div {
    flex: 1;
    line-height: 20px;
    padding-left: 7px;
    background: linear-gradient(#a2a2a2, #727272);
  }
  .btngrp > div + div { border-top: 1px solid #2c2c2c; }

  /* viewport */
  .view {
    flex: 1;
    position: relative;
    background: #393939;
    overflow: hidden;
    min-width: 0;
  }
  .scene3d { display: block; }
  .vlabel { position: absolute; color: #e6e6e6; white-space: nowrap; }
  .view-name { left: 19px; top: 11px; }
  .obj-name { left: 70px; top: 891px; }
  .axl { position: absolute; font-size: 11px; }
  .axz { left: 26px; top: 852px; color: #1a1ad0; }
  .axy { left: 41px; top: 863px; color: #20b020; }
  .axx { left: 47px; top: 881px; color: #b81010; }

  /* sidebar */
  .npanel {
    position: relative;
    width: 191px;
    flex: none;
    display: flex;
    background: #727272;
    overflow: hidden;
  }
  .ncontent { width: 174px; flex: none; box-sizing: border-box; padding: 0 8px; }
  .ncontent .hdr { margin: 0 -4px; }
  .lab { height: 14px; line-height: 14px; padding-left: 3px; white-space: nowrap; }
  .first-lab { margin-top: -3px; }
  .two { display: flex; justify-content: space-between; }
  .two .numgrp { width: 118px; }

  .numgrp {
    height: 59px;
    box-sizing: border-box;
    border: 1px solid #2c2c2c;
    border-radius: 8px;
    overflow: hidden;
    display: flex;
    flex-direction: column;
  }
  .numgrp.two-rows { height: 40px; }
  .numgrp.one { height: 20px; border-radius: 9px; }
  .num {
    flex: 1;
    min-height: 0;
    display: flex;
    align-items: center;
    background: linear-gradient(#8c8c8c, #b6b6b6);
    padding: 0 5px;
    white-space: nowrap;
  }
  .num + .num { border-top: 1px solid #2c2c2c; }
  .num span { margin-left: 5px; }
  .num b { margin-left: auto; margin-right: 5px; font-weight: normal; }
  .al, .ar { width: 0; height: 0; border: 3.5px solid transparent; flex: none; }
  .al { border-right: 4px solid #6a6a6a; border-left: 0; }
  .ar { border-left: 4px solid #6a6a6a; border-right: 0; }

  .locks {
    width: 31px;
    height: 59px;
    box-sizing: border-box;
    border: 1px solid #2c2c2c;
    border-radius: 4px;
    overflow: hidden;
    display: flex;
    flex-direction: column;
  }
  .locks > div {
    flex: 1;
    display: flex;
    align-items: center;
    justify-content: center;
    background: linear-gradient(#868686, #646464);
  }
  .locks > div + div { border-top: 1px solid #2c2c2c; }

  .radio {
    display: flex;
    height: 20px;
    box-sizing: border-box;
    border: 1px solid #2c2c2c;
    border-radius: 5px;
    overflow: hidden;
    background: linear-gradient(#5c5c5c, #323232);
    color: #efefef;
  }
  .radio > div {
    flex: 1;
    text-align: center;
    line-height: 20px;
    white-space: nowrap;
  }
  .radio > div + div { border-left: 1px solid #2c2c2c; }
  .radio .active { background: linear-gradient(#4f79bc, #5f89cc); color: #0c0c0c; }

  .gp-new .seg.btn { justify-content: flex-start; position: relative; padding-top: 0; }
  .gp-plus { margin-left: 3px; }
  .gp-txt { margin-left: 43px; }
  .btn1 {
    height: 20px;
    box-sizing: border-box;
    border: 1px solid #2c2c2c;
    border-radius: 5px;
    background: linear-gradient(#a2a2a2, #787878);
    text-align: center;
    line-height: 20px;
  }
  .field {
    height: 20px;
    box-sizing: border-box;
    border: 1px solid #2c2c2c;
    border-radius: 5px;
    background: linear-gradient(#8e8e8e, #b6b6b6);
    display: flex;
    align-items: center;
    padding: 0 2px 0 4px;
    white-space: nowrap;
  }
  .sp { flex: 1; }
  .pad { padding-left: 6px; }
  .item { display: flex; align-items: center; gap: 6px; padding-left: 4px; }

  .scroll { flex: none; box-sizing: border-box; border-radius: 6px; background: #5e5e5e; }
  .thumb { border-radius: 6px; background: linear-gradient(90deg, #808080, #929292); }
  .vscroll { width: 12px; height: 901px; margin-top: 5px; padding-top: 36px; }
  .vscroll .thumb { height: 775px; }

  .h3d { height: 26px; padding-left: 9px; }
  .mode { width: 148px; margin-left: 13px; padding-left: 4px; }
  .shade { width: 34px; margin-left: 6px; padding-left: 3px; padding-right: 4px; }
  .pivot { width: 54px; margin-left: 6px; }
  .manip { width: 169px; margin-left: 7px; }
  .m-btn { width: 19.5px; }
  .seg.global { flex: 1; justify-content: space-between; padding: 0 5px 0 6px; }
  .layers {
    display: grid;
    grid-template-columns: repeat(5, 1fr);
    grid-template-rows: 1fr 1fr;
    height: 20px;
    width: 50px;
    box-sizing: border-box;
    border: 1px solid #2c2c2c;
    border-radius: 4px;
    overflow: hidden;
    background: #2c2c2c;
    gap: 1px;
    flex: none;
  }
  .lc { background: #808080; position: relative; }
  .dot1::after, .dot2::after {
    content: "";
    position: absolute;
    left: 2px;
    top: 1px;
    width: 4px;
    height: 5px;
    border-radius: 2px;
    background: #ee9a3c;
    border: 1px solid #333;
    box-sizing: border-box;
  }
  .dot2::after { background: #caa080; border-color: #555; }
  .la1 { margin-left: 5px; }
  .la2 { margin-left: 6px; }
  .t-bind { margin-left: 6px; }
  .t-prop { margin-left: 7px; background: linear-gradient(#868686, #747474); border-color: #666; }
  .snap { width: 75px; margin-left: 5px; }
  .cam { width: 38px; margin-left: 6px; }

  /* timeline */
  .timeline {
    position: relative;
    flex: none;
    height: 67px;
    border-top: 1px solid #0d0d0d;
    box-sizing: border-box;
  }
  .tl-grid { display: block; }
  .ruler {
    position: relative;
    height: 14px;
    margin: 0 5px 0 4px;
    background: #636363;
    border-radius: 7px;
    border: 1px solid #4a4a4a;
    box-sizing: border-box;
  }
  .ruler-thumb {
    position: absolute;
    left: 0;
    top: 0;
    bottom: 0;
    width: 926px;
    border-radius: 7px;
    background: linear-gradient(#8e8e8e, #b2b2b2);
  }
  .ruler-thumb i {
    position: absolute;
    top: 0;
    bottom: 0;
    width: 8px;
    border-radius: 6px;
    background: #686868;
  }
  .ruler-thumb i:first-child { left: 0; }
  .ruler-thumb i:last-child { right: 0; }
  .tick {
    position: absolute;
    top: -1px;
    transform: translateX(-50%);
    margin-left: -5px;
    color: #222;
    font-size: 11px;
  }

  .htime { height: 26px; padding: 1px 0 0 9px; border-top: 1px solid #606060; }
  .clock-grp { width: 39px; margin-left: 14px; }
  .numrow { height: 20px; display: flex; flex: none; box-sizing: border-box; border: 1px solid #2c2c2c; border-radius: 9px; overflow: hidden; }
  .numrow .num + .num { border-top: 0; border-left: 1px solid #2c2c2c; }
  .range { width: 229px; margin-left: 5px; }
  .cur { width: 90px; margin-left: 6px; }
  .play { width: 119px; margin-left: 16px; }
  .sync { width: 88px; margin-left: 7px; }
  .rec { margin-left: 18px; }
  .keying { width: 170px; margin-left: 6px; }

  /* outliner */
  .outliner {
    position: relative;
    height: 180px;
    flex: none;
    overflow: hidden;
    border-bottom: 1px solid #0d0d0d;
    box-sizing: border-box;
  }
  .oh { height: 26px; padding-left: 8px; border-bottom: 1px solid #636363; }
  .o1 { margin-left: 13px; }
  .scenes { width: 117px; margin-left: 13px; }
  .search { width: 110px; margin-left: 5px; border-radius: 6px; padding-left: 2px; }
  .tree { position: relative; }
  .lines { position: absolute; left: 0; top: 0; z-index: 1; pointer-events: none; }
  .row {
    height: 20px;
    box-sizing: border-box;
    display: flex;
    align-items: center;
    padding-top: 3px;
    background: #727272;
    white-space: nowrap;
    width: 320px;
  }
  .row.alt { background: #6d6d6d; }
  .row.sel { background: #7f878d; }
  .exp { width: 12px; flex: none; display: flex; justify-content: center; position: relative; z-index: 2; }
  .circ {
    border-radius: 50%;
    background: #ccc linear-gradient(transparent 3px, #222 3px, #222 4px, transparent 4px);
    border: 1px solid #222;
    width: 7px;
    height: 7px;
    position: relative;
  }
  .circ:not(.minus)::after {
    content: "";
    position: absolute;
    left: 3px;
    top: 1px;
    width: 1px;
    height: 5px;
    background: #222;
  }
  .oicon { position: relative; width: 16px; height: 16px; flex: none; z-index: 2; }
  .oicon.halo::before {
    content: "";
    position: absolute;
    inset: -2px;
    border-radius: 50%;
    background: rgba(255, 255, 255, .22);
  }
  .oicon.halo.orange::before { background: rgba(240, 160, 70, .45); }
  .oicon .ic { position: relative; }
  .oname { margin-left: 2px; position: relative; z-index: 2; top: 1px; }
  .obar { width: 2px; height: 12px; background: #4a4a4a; margin: 0 8px; flex: none; }
  .oextra { margin-right: 5px; flex: none; opacity: .95; }
  .cols {
    position: absolute;
    left: 320px;
    top: 0;
    width: 60px;
    z-index: 2;
    background: repeating-linear-gradient(#727272 0 20px, #6d6d6d 20px 40px);
  }
  .colrow { display: flex; height: 20px; }
  .colrow span {
    flex: 1;
    display: flex;
    align-items: center;
    justify-content: center;
    padding: 1px 2px 0 0;
    border-left: 1px solid #636363;
  }
  .faded { opacity: .35; }
  .oscroll {
    position: absolute;
    left: 380px;
    top: 5px;
    width: 12px;
    height: 144px;
    z-index: 2;
  }
  .oscroll .thumb { height: 121px; }

  /* properties */
  .props {
    position: relative;
    flex: 1;
    min-height: 0;
  }
  .ph { height: 26px; padding-left: 8px; border-bottom: 1px solid #636363; }
  .ptabs { width: 180px; margin-left: 8px; }
  .ptabs .seg { flex: 1; }
  .ptabs .seg.dark .ic { opacity: .85; }
  .pbody { padding: 0 9px 0 7px; }
  .pbody .hdr { margin: 0 -3px; }
  .crumbs { display: flex; align-items: center; height: 16px; margin-top: 11px; padding-left: 2px; }
  .c-scene { margin-left: 8px; }
  .c-arr { width: 6px; height: 8px; margin-left: 4px; }
  .c-cube { margin-left: 15px; margin-right: 2px; }
  .namefield { margin-top: 17px; }
  .tri-col { display: grid; grid-template-columns: 120px 121px 121px; gap: 9px; }
  .tri-col .numgrp { height: 60px; }
  .rotmode { display: flex; align-items: center; justify-content: space-between; height: 20px; }
  .rm { width: 249px; }
  .rel { display: grid; grid-template-columns: 186px 186px; column-gap: 8px; }
  .layrow { display: flex; justify-content: space-between; }
  .layers.big { width: 88px; height: 30px; background: #303030; }
  .big .lc { background: #7d7d7d; }
  .first-act .lc:nth-child(1), .first-act .lc:nth-child(2) { background: #5a5a5a; }
  .dimdd { width: 100%; }
  .box-dd { width: 89px; margin-left: 27px; }
  .disp { display: flex; align-items: center; height: 20px; }
  .disp1 { width: 194px; padding-left: 2px; box-sizing: border-box; }
  .disp2 { width: 70px; }
  .addgroup .seg.btn.grow { justify-content: center; }
  .five > div { flex: 1 1 0; }
</style>
